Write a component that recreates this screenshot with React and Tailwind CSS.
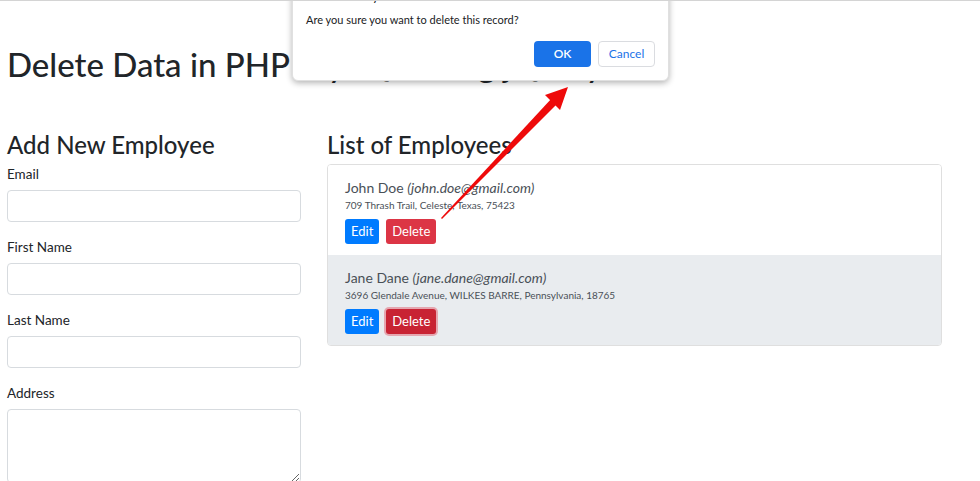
import React from "react";

const employees = [
  {
    id: 1,
    name: "John Doe",
    email: "john.doe@gmail.com",
    address: "709 Thrash Trail, Celeste, Texas, 75423",
    active: false,
  },
  {
    id: 2,
    name: "Jane Dane",
    email: "jane.dane@gmail.com",
    address: "3696 Glendale Avenue, WILKES BARRE, Pennsylvania, 18765",
    active: true,
  },
];

const Field = ({ label, area }) => (
  <div className="mb-[15px]">
    <label className="block text-[13.5px] leading-[20px] mb-[6px]">{label}</label>
    {area ? (
      <textarea className="block w-full h-[74px] border border-[#d7dbdf] rounded-[4px] bg-white" />
    ) : (
      <input className="block w-full h-[32px] border border-[#d7dbdf] rounded-[4px] bg-white" />
    )}
  </div>
);

const EmployeeRow = ({ emp }) => (
  <div
    className={`px-[17px] pt-[13px] pb-[11px] ${
      emp.active ? "bg-[#e9ecef]" : "bg-white"
    }`}
  >
    <div className="text-[14px] leading-[20px] text-[#495057]">
      {emp.name} <i>({emp.email})</i>
    </div>
    <div className="text-[10px] leading-[14px] text-[#495057]">{emp.address}</div>
    <div className="flex gap-[7px] mt-[7px]">
      <button className="h-[25px] px-[6px] rounded-[3px] bg-[#007bff] text-white text-[13px]">
        Edit
      </button>
      <button
        className={`h-[25px] px-[6px] rounded-[3px] text-white text-[13px] ${
          emp.active ? "bg-[#c82333] shadow-[0_0_0_2px_rgba(225,83,97,0.45)]" : "bg-[#dc3545]"
        }`}
      >
        Delete
      </button>
    </div>
  </div>
);

const ConfirmDialog = () => (
  <div className="absolute left-[292px] top-[-26px] w-[377px] bg-white rounded-[6px] border border-[#e0e0e0] shadow-[0_2px_6px_rgba(0,0,0,0.3)] px-[13px] pt-[12px] pb-[13px]">
    <div className="text-[13px] leading-[16px] text-[#202124]">localhost says</div>
    <div className="mt-[9px] text-[11px] leading-[14px] text-[#202124]">
      Are you sure you want to delete this record?
    </div>
    <div className="flex justify-end gap-[7px] mt-[14px]">
      <button className="w-[57px] h-[26px] rounded-[4px] bg-[#1a73e8] text-white text-[12px] font-semibold">
        OK
      </button>
      <button className="w-[57px] h-[26px] rounded-[4px] bg-white border border-[#dadce0] text-[#1a73e8] text-[12px]">
        Cancel
      </button>
    </div>
  </div>
);

// red annotation arrow pointing at the OK button
const Arrow = () => (
  <svg className="absolute left-0 top-0 pointer-events-none" width="980" height="481">
    <polygon points="441,217 442,218 557,103 552,97" fill="#ee0a0a" />
    <polygon points="568,86 560,109 545,94" fill="#ee0a0a" />
  </svg>
);

const App = () => {
  return (
    <div className="relative h-[481px] overflow-hidden bg-white border-t border-[#d4d4d4] text-[#212529] font-['Lato','Liberation_Sans',sans-serif]">
      <h1 className="pt-[43px] px-[7px] text-[33px] leading-[40px] font-medium">
        Delete Data in PHP MySQL Using jQuery
      </h1>
      <div className="flex mt-[46px] px-[7px]">
        <div className="w-[294px]">
          <h2 className="text-[24px] leading-[29px] font-medium mb-[5px]">Add New Employee</h2>
          <Field label="Email" />
          <Field label="First Name" />
          <Field label="Last Name" />
          <Field label="Address" area />
        </div>
        <div className="w-[615px] ml-[26px]">
          <h2 className="text-[24px] leading-[29px] font-medium mb-[5px]">List of Employees</h2>
          <div className="border border-[#dfdfdf] rounded-[4px] overflow-hidden">
            {employees.map((emp) => (
              <EmployeeRow key={emp.id} emp={emp} />
            ))}
          </div>
        </div>
      </div>
      <ConfirmDialog />
      <Arrow />
    </div>
  );
};

export default App;
